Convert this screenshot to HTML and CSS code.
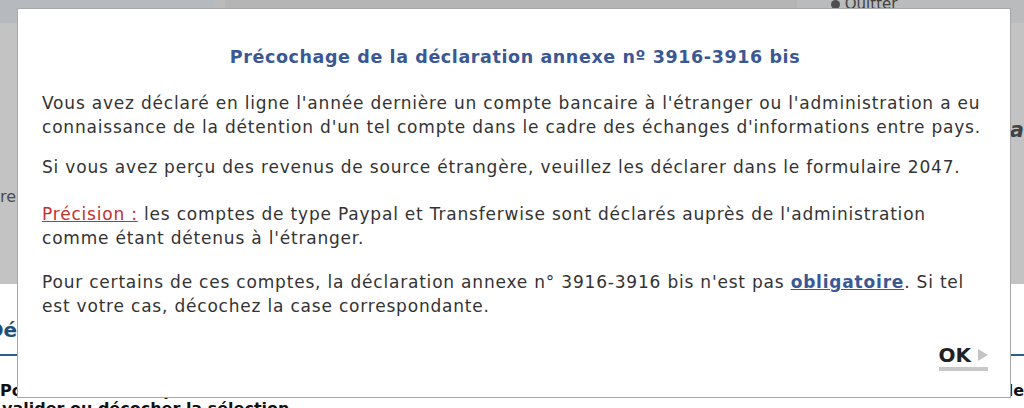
FILE: index.html
```html
<!DOCTYPE html>
<html lang="fr">
<head>
  <meta charset="UTF-8" />
  <meta name="viewport" content="width=device-width, initial-scale=1" />
  <title>Précochage de la déclaration annexe</title>
  <link rel="stylesheet" href="styles.css">
</head>
<body>
  <div class="page">
    <div class="topbar">
      <div class="topbar-left"></div>
      <div class="topbar-mid"></div>
      <div class="topbar-right"><span class="quit-icon"></span> Quitter</div>
    </div>
    <div class="upper">
      <span class="side-left">re</span>
      <span class="side-right">'a</span>
    </div>
    <div class="lower">
      <h2 class="section-title">Déclaration annexe</h2>
      <p class="bold-line"><span>Pour certains comptes</span><span>de</span></p>
      <p class="bold-line2">valider ou décocher la sélection</p>
    </div>
  </div>

  <div class="overlay"></div>

  <div class="modal">
    <h1 class="modal-title">Précochage de la déclaration annexe nº 3916-3916 bis</h1>
    <p class="p1">Vous avez déclaré en ligne l'année dernière un compte bancaire à l'étranger ou l'administration a eu connaissance de la détention d'un tel compte dans le cadre des échanges d'informations entre pays.</p>
    <p class="p2">Si vous avez perçu des revenus de source étrangère, veuillez les déclarer dans le formulaire 2047.</p>
    <p class="p3"><span class="precision">Précision :</span> les comptes de type Paypal et Transferwise sont déclarés auprès de l'administration comme étant détenus à l'étranger.</p>
    <p class="p4">Pour certains de ces comptes, la déclaration annexe n° 3916-3916 bis n'est pas <a href="#" class="link">obligatoire</a>. Si tel est votre cas, décochez la case correspondante.</p>
    <div class="actions">
      <a href="#" class="btn-ok">OK <span class="arrow"></span></a>
    </div>
  </div>
</body>
</html>
```

FILE: styles.css
```css
html, body {
  margin: 0;
  padding: 0;
  height: 408px;
  overflow: hidden;
}
body {
  background: #fff;
  font-family: "DejaVu Sans", Verdana, sans-serif;
  color: #333;
  position: relative;
}
.page {
  width: 1024px;
}
.topbar {
  display: flex;
  height: 23px;
}
.topbar-left {
  width: 215px;
  background: #eaeef2;
}
.topbar-mid {
  width: 572px;
  background: #e8e8e8;
  border-left: 10px solid #f0f0f0;
}
.topbar-right {
  flex: 1;
  background: #eef0f2;
  font-size: 15px;
  color: #555;
  padding-left: 34px;
  line-height: 2px;
}
.quit-icon {
  display: inline-block;
  width: 9px;
  height: 9px;
  border-radius: 50%;
  background: #666;
}
.upper {
  height: 261px;
  position: relative;
  background: #fafafa;
}
.side-left {
  position: absolute;
  left: 0;
  top: 164px;
  font-size: 16px;
  color: #5f646a;
}
.side-right {
  position: absolute;
  right: 0;
  top: 95px;
  font-size: 21px;
  font-weight: bold;
  font-style: italic;
  color: #555;
}
.lower {
  padding-top: 34px;
}
.section-title {
  margin: 0;
  font-size: 20px;
  color: #1f4f7a;
  line-height: 24px;
  padding-bottom: 12px;
  border-bottom: 2px solid #2d5f8a;
  text-indent: -13px;
}
.bold-line {
  display: flex;
  justify-content: space-between;
  margin: 26px 0 0;
  font-weight: bold;
  font-size: 16px;
  line-height: 18px;
  color: #111;
}
.bold-line2 {
  margin: 0 0 0 2px;
  font-weight: bold;
  font-size: 16px;
  line-height: 18px;
  color: #111;
}
.overlay {
  position: absolute;
  left: 0;
  top: 0;
  width: 1024px;
  height: 284px;
  background: rgba(0, 0, 0, 0.22);
}
.modal {
  position: absolute;
  left: 17px;
  top: 8px;
  width: 994px;
  height: 390px;
  box-sizing: border-box;
  border: 1px solid #a8a8a8;
  background: #fff;
  padding: 37px 22px 0 24px;
  display: flex;
  flex-direction: column;
}
.modal-title {
  margin: 0 0 23px;
  text-align: center;
  font-size: 17.5px;
  letter-spacing: 0.6px;
  line-height: 22px;
  color: #3a5894;
}
.modal p {
  margin: 0;
  font-size: 17px;
  letter-spacing: 0.8px;
  line-height: 24px;
  color: #333;
}
.modal .p2 {
  margin-top: 16px;
}
.modal .p3 {
  margin-top: 23px;
}
.modal .p4 {
  margin-top: 20px;
}
.precision {
  color: #c23030;
  text-decoration: underline;
}
.link {
  color: #3a5894;
  font-weight: bold;
}
.actions {
  display: flex;
  justify-content: flex-end;
  margin-top: 25px;
}
.btn-ok {
  display: flex;
  align-items: center;
  gap: 7px;
  font-size: 20px;
  font-weight: bold;
  color: #222;
  text-decoration: none;
  line-height: 24px;
  border-bottom: 4px solid #c8c8c8;
}
.arrow {
  display: inline-block;
  width: 0;
  height: 0;
  border-top: 6px solid transparent;
  border-bottom: 6px solid transparent;
  border-left: 10px solid #c4c4c4;
}
```
